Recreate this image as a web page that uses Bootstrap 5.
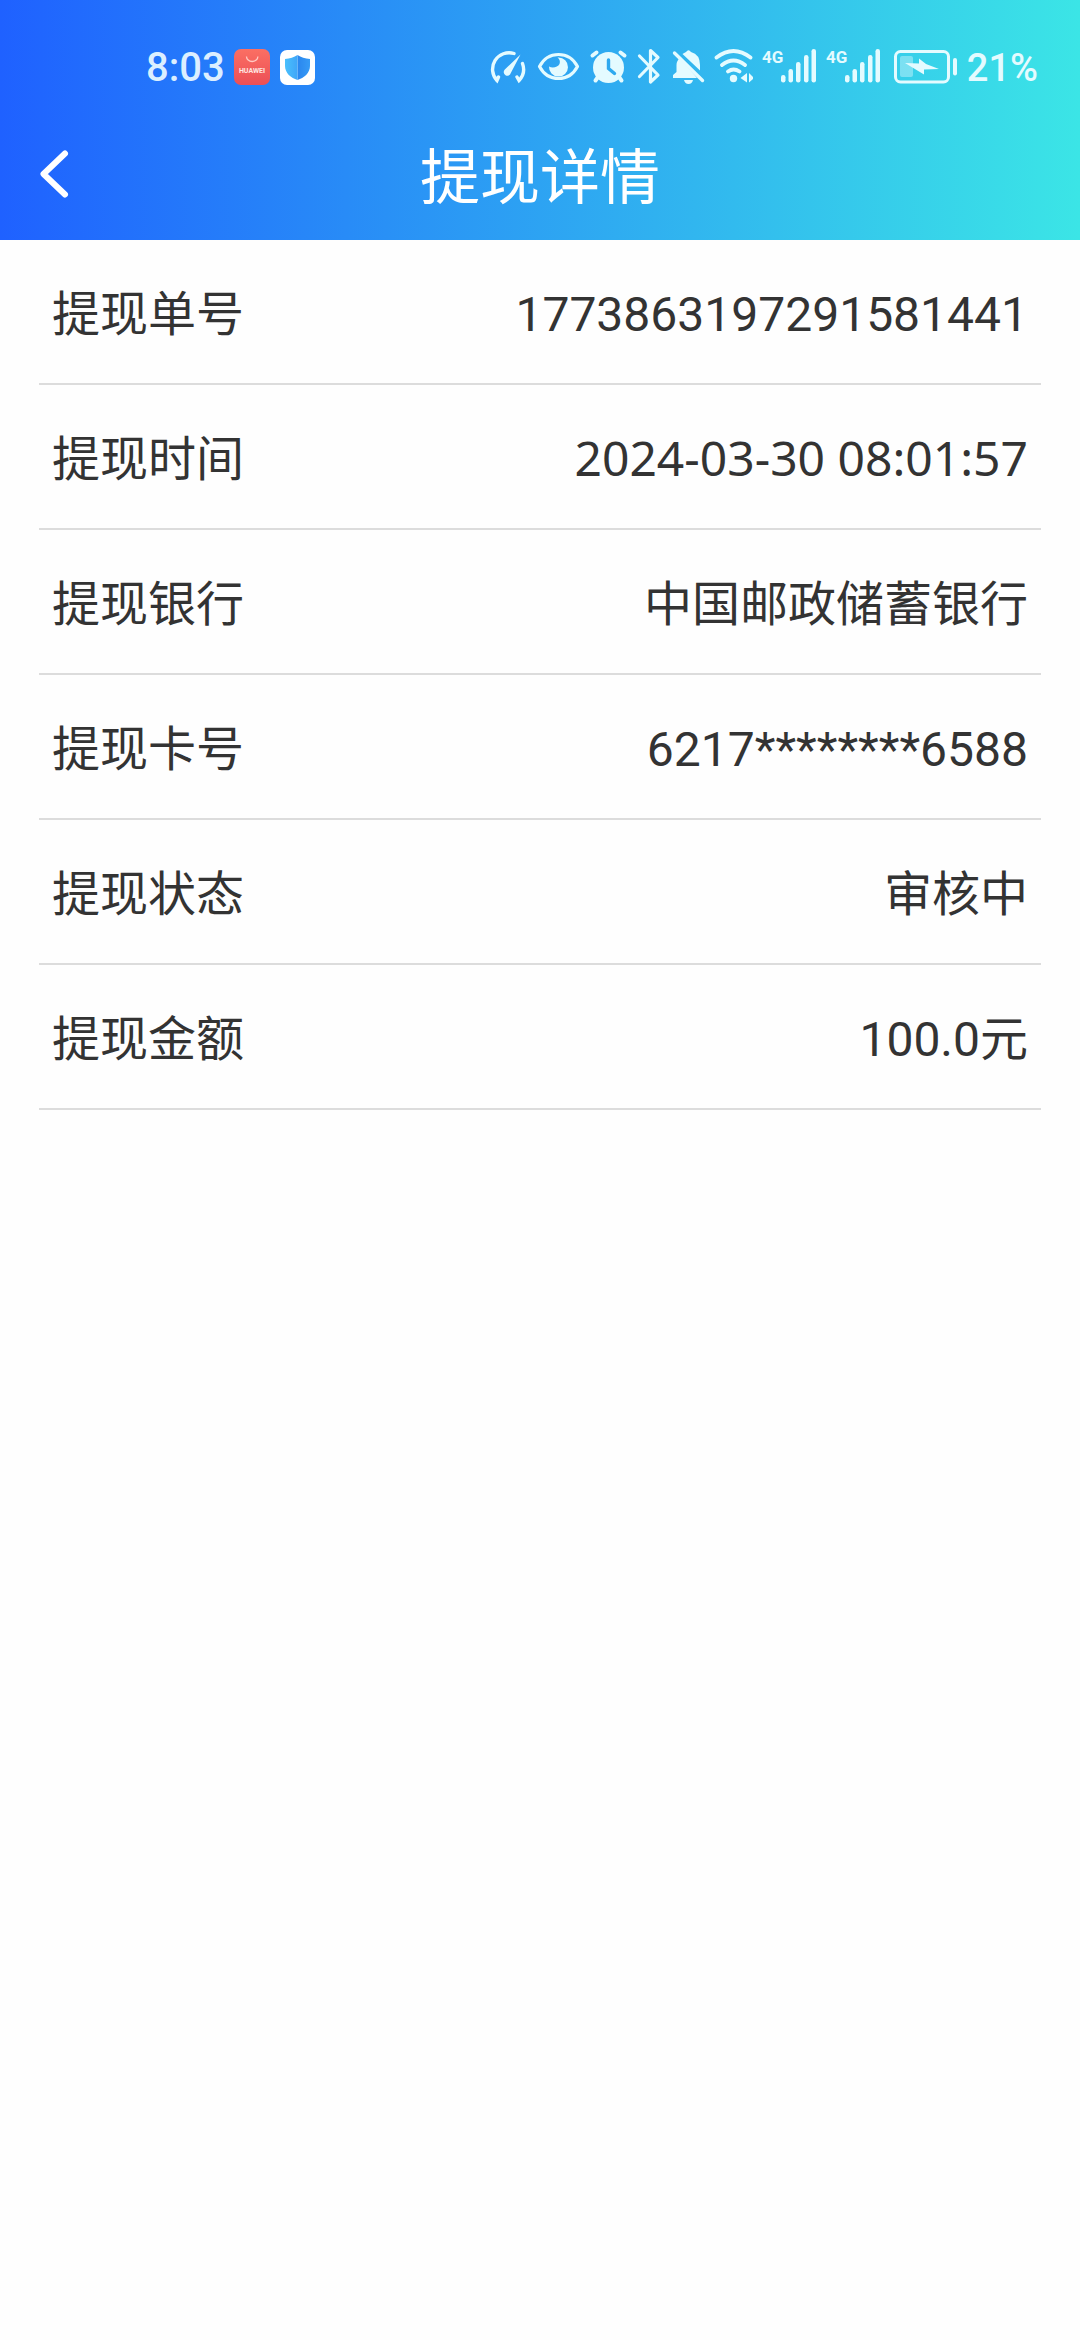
<!DOCTYPE html>
<html lang="zh-CN">
<head>
<meta charset="utf-8">
<meta name="viewport" content="width=device-width, initial-scale=1">
<title>提现详情</title>
<link rel="stylesheet" href="https://cdn.jsdelivr.net/npm/bootstrap@5.3.0/dist/css/bootstrap.min.css">
<style>
  body { font-family: Roboto, "Noto Sans CJK SC", sans-serif; color: #333; background: #fefefe; }
  .app-header { background: linear-gradient(90deg, #1f61ff, #3be5e6); color: #fff; }
  .status-bar { height: 112px; padding: 22px 42px 0 146px; color: #e4fbff; }
  .status-bar svg { height: 40px; flex: none; }
  .status-icons { gap: 9px; }
  .clock { font-size: 40px; line-height: 48px; padding-top: 2px; font-weight: 500; color: #dcefff; }
  .battery-text { font-size: 38px; line-height: 48px; padding-top: 2px; font-weight: 500; }
  .title-bar { height: 128px; }
  .title-bar h1 { font-size: 60px; line-height: 80px; padding-top: 5px; font-weight: 400; }
  .side { width: 110px; }
  .back-btn { line-height: 0; }
  .detail-list { padding: 0 39px; }
  .detail-row { min-height: 145px; padding: 39px 13px 28px; border-bottom: 2px solid #dcdcdc; font-size: 48px; line-height: 72px; }
  .stamp { font-family: "Noto Sans", sans-serif; line-height: 68px; }
</style>
<script src="https://cdn.jsdelivr.net/npm/bootstrap@5.3.0/dist/js/bootstrap.bundle.min.js"></script>
</head>
<body>
<header class="app-header">
  <div class="status-bar d-flex align-items-center justify-content-between">
    <div class="status-icons d-flex align-items-center">
      <span class="clock">8:03</span>
      <svg width="37" viewBox="234 46 37 40" aria-hidden="true">
        <defs><linearGradient id="red" x2="0" y2="1"><stop stop-color="#fb6f63"/><stop offset="1" stop-color="#ec4f56"/></linearGradient></defs>
        <rect x="234" y="48" width="36" height="36" rx="7" fill="url(#red)"/>
        <path d="M246.500 55.500a5.700 5 0 0 0 11.400 0" fill="none" stroke="#ffc9c2" stroke-width="1.300"/>
        <text x="252" y="72" text-anchor="middle" font-family="Roboto" font-size="7" font-weight="700" fill="#ffe6e2">HUAWEI</text>
      </svg>
      <svg width="36" viewBox="280 46 36 40" aria-hidden="true">
        <defs><linearGradient id="shieldL"><stop stop-color="#49c0fd"/><stop offset="1" stop-color="#3fa6f8"/></linearGradient><linearGradient id="shieldR"><stop stop-color="#2a86ee"/><stop offset="1" stop-color="#369bf6"/></linearGradient></defs>
        <rect x="280" y="49" width="35" height="35" rx="7" fill="#fff"/>
        <path d="M297.500 54C301 56.500 305 57.500 310 58V65C310 72 304 77 297.500 79Z" fill="url(#shieldR)"/>
        <path d="M297.500 54C294 56.500 290 57.500 285 58V65C285 72 291 77 297.500 79Z" fill="url(#shieldL)"/>
      </svg>
    </div>
    <div class="status-icons d-flex align-items-center">
      <svg width="40" viewBox="487 47 40 40" fill="none" stroke="currentColor" stroke-width="3.400" stroke-linecap="round" aria-hidden="true">
        <path d="M513 53.500A16.500 16.500 0 0 0 496 80.500L497.500 77M521.500 63.500A16.500 16.500 0 0 1 518 80.500L516 77"/>
        <path d="M519.500 54.500L503.800 69.500A3.600 3.600 0 1 0 509.800 73Z" fill="currentColor" stroke="none"/>
      </svg>
      <svg width="43" viewBox="536 47 43 40" aria-hidden="true">
        <path d="M538.500 66.500C547 50.500 568 50.500 576.500 66.500C568 82.500 547 82.500 538.500 66.500Z" fill="none" stroke="currentColor" stroke-width="3.200" stroke-linejoin="round"/>
        <path d="M557.500 57.500A9.500 9.500 0 1 1 548 66.500C551 68.500 557 67.500 558.500 64C559.500 61 558.500 59 556.500 57.500Z" fill="currentColor"/>
      </svg>
      <svg width="39" viewBox="588 47 39 40" aria-hidden="true">
        <g stroke="currentColor" stroke-width="4" stroke-linecap="round"><path d="M591.500 55.500L595.500 52.500M623.500 55.500L619.500 52.500"/><path d="M597 77L594.500 80.500M618 77L620.500 80.500"/></g>
        <circle cx="607.500" cy="67.500" r="15.500" fill="currentColor"/>
        <path d="M607.500 60V68.500L613.500 73.500" fill="none" stroke="#2ea9ef" stroke-width="3.400" stroke-linecap="round"/>
      </svg>
      <svg width="25" viewBox="636 47 25 40" fill="none" stroke="currentColor" stroke-width="3.200" stroke-linejoin="round" stroke-linecap="round" aria-hidden="true">
        <path d="M638.500 56L657 75L649.500 82V50.500L657 57.500L638.500 76.500"/>
      </svg>
      <svg width="34" viewBox="670 47 34 40" aria-hidden="true">
        <path d="M678.500 58.500L694 75.500L696 78H672V75L675.500 72V65Q675.500 61 678.500 58.500Z" fill="currentColor"/>
        <path d="M681.500 54Q684 52.500 685 52Q687.500 48.500 690 52Q699 54.500 699 65V70.500Z" fill="currentColor"/>
        <path d="M673.500 53L701.500 80.500" stroke="currentColor" stroke-width="3.400" stroke-linecap="round"/>
        <path d="M683 80H692Q691 84 687.500 84Q684 84 683 80Z" fill="currentColor"/>
      </svg>
      <svg width="39" viewBox="713 47 39 40" aria-hidden="true">
        <g fill="none" stroke="currentColor" stroke-width="3.800" stroke-linecap="round"><path d="M715.500 57.500Q732.500 44.500 749.500 57.500M721 65Q732.500 56 744 65M727 71.500Q732.500 67.500 738.500 71.500"/></g>
        <circle cx="732.500" cy="78.500" r="3.700" fill="currentColor"/>
        <path d="M739.500 78L746 73V82.500ZM748 73L753 78L748 82.500Z" fill="currentColor"/>
      </svg>
      <svg width="55" viewBox="761 47 55 40" fill="currentColor" aria-label="4G">
        <text x="761" y="63" font-family="Roboto" font-size="17" font-weight="700">4G</text>
        <rect x="780" y="75" width="4.500" height="7.500" rx="2.200"/><rect x="787.500" y="69" width="4.500" height="13.500" rx="2.200"/><rect x="795" y="62" width="4.500" height="20.500" rx="2.200"/><rect x="803" y="55" width="4.500" height="27.500" rx="2.200"/><rect x="810.500" y="49" width="4.500" height="33.500" rx="2.200"/>
      </svg>
      <svg width="55" viewBox="761 47 55 40" fill="currentColor" aria-label="4G">
        <text x="761" y="63" font-family="Roboto" font-size="17" font-weight="700">4G</text>
        <rect x="780" y="75" width="4.500" height="7.500" rx="2.200"/><rect x="787.500" y="69" width="4.500" height="13.500" rx="2.200"/><rect x="795" y="62" width="4.500" height="20.500" rx="2.200"/><rect x="803" y="55" width="4.500" height="27.500" rx="2.200"/><rect x="810.500" y="49" width="4.500" height="33.500" rx="2.200"/>
      </svg>
      <svg width="68" viewBox="889 47 68 40" aria-hidden="true">
        <rect x="894.500" y="51.500" width="53" height="30.500" rx="5" fill="none" stroke="currentColor" stroke-width="3"/>
        <rect x="899" y="56" width="13" height="21" rx="2" fill="currentColor" opacity=".4"/>
        <path d="M904 63L918 63.500V58.500L925 64L938 69L923 69.500V74.500Z" fill="currentColor"/>
        <rect x="952" y="58" width="4" height="17.500" rx="2" fill="currentColor"/>
      </svg>
      <span class="battery-text">21%</span>
    </div>
  </div>
  <nav class="title-bar d-flex align-items-center justify-content-between" aria-label="页面导航">
    <div class="side">
      <button type="button" class="btn back-btn border-0 p-0 ps-4 text-white" aria-label="返回">
        <svg width="60" height="60" viewBox="24 146 60 60" fill="none" stroke="currentColor" stroke-width="6" stroke-linecap="round" stroke-linejoin="round"><path d="M65 153.500L43.500 174L65 194.500"/></svg>
      </button>
    </div>
    <h1 class="m-0">提现详情</h1>
    <div class="side"></div>
  </nav>
</header>
<main>
  <dl class="detail-list m-0">
    <div class="detail-row d-flex justify-content-between align-items-baseline"><dt class="fw-normal">提现单号</dt><dd class="m-0">1773863197291581441</dd></div>
    <div class="detail-row d-flex justify-content-between align-items-baseline"><dt class="fw-normal">提现时间</dt><dd class="m-0 stamp">2024-03-30 08:01:57</dd></div>
    <div class="detail-row d-flex justify-content-between align-items-baseline"><dt class="fw-normal">提现银行</dt><dd class="m-0">中国邮政储蓄银行</dd></div>
    <div class="detail-row d-flex justify-content-between align-items-baseline"><dt class="fw-normal">提现卡号</dt><dd class="m-0">6217********6588</dd></div>
    <div class="detail-row d-flex justify-content-between align-items-baseline"><dt class="fw-normal">提现状态</dt><dd class="m-0">审核中</dd></div>
    <div class="detail-row d-flex justify-content-between align-items-baseline"><dt class="fw-normal">提现金额</dt><dd class="m-0">100.0元</dd></div>
  </dl>
</main>
</body>
</html>
